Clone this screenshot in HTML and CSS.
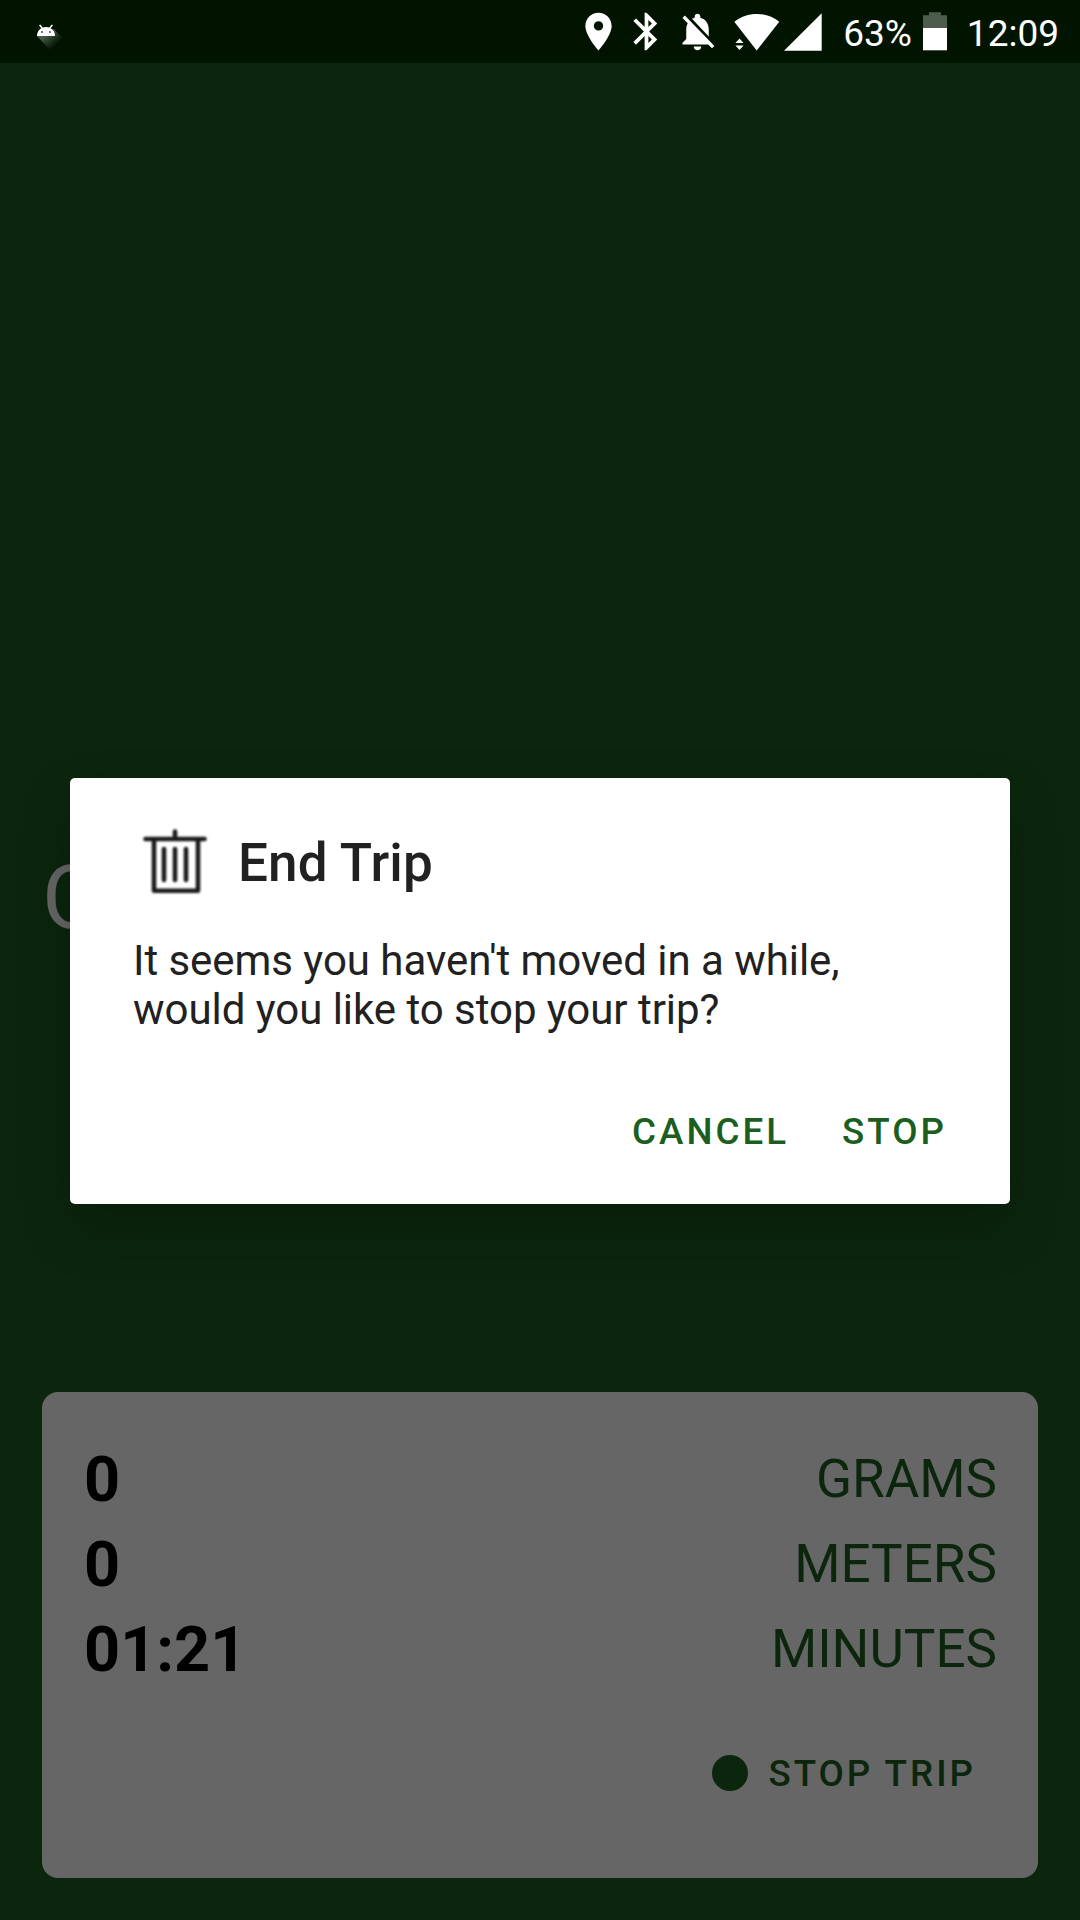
FILE: index.html
```html
<!DOCTYPE html>
<html lang="en">
<head>
<meta charset="utf-8">
<title>End Trip</title>
<link rel="stylesheet" href="styles.css">
</head>
<body>
<div class="screen">
  <header class="status-bar">
    <svg class="android" width="28" height="28" viewBox="0 0 28 28">
      <defs><linearGradient id="cast" x1="6" y1="8" x2="20" y2="24" gradientUnits="userSpaceOnUse"><stop offset="0.2" stop-color="#fff" stop-opacity=".3"/><stop offset="0.9" stop-color="#fff" stop-opacity="0"/></linearGradient></defs>
      <path d="M1 12 18 5 28 16 16 28Z" fill="url(#cast)"/>
      <path d="M1 12C1 8.500 2.800 5.800 5.300 4.300L3 1.200 4.200.4 6.700 3.500C8.700 2.700 11.300 2.700 13.300 3.500L15.800.4 17 1.200 14.700 4.300C17.200 5.800 19 8.500 19 12Z" fill="#fff"/>
      <circle cx="6" cy="8" r="1" fill="#455047"/><circle cx="14" cy="8" r="1" fill="#455047"/>
    </svg>
    <div class="system-icons">
      <svg class="pin" width="45" height="45" viewBox="0 0 24 24"><path d="M12 2C8.130 2 5 5.130 5 9c0 5.250 7 13 7 13s7-7.750 7-13c0-3.870-3.130-7-7-7zm0 9.500a2.500 2.500 0 1 1 0-5 2.500 2.500 0 0 1 0 5z"/></svg>
      <svg class="bluetooth" width="45" height="45" viewBox="0 0 24 24"><path d="M17.710 7.710L12 2h-1v7.590L6.410 5 5 6.410 10.590 12 5 17.590 6.410 19 11 14.410V22h1l5.710-5.710-4.300-4.290 4.300-4.290zM13 5.830l1.880 1.880L13 9.590V5.830zm1.880 10.460L13 18.170v-3.760l1.880 1.880z"/></svg>
      <svg class="bell" width="45" height="45" viewBox="0 0 24 24"><path d="M20 18.690L7.840 6.140 5.270 3.490 4 4.760l2.800 2.800v.01c-.52.99-.8 2.160-.8 3.420v5l-2 2v1h13.730l2 2L21 19.720l-1-1.030zM12 22c1.110 0 2-.89 2-2h-4c0 1.110.89 2 2 2zm6-7.320V11c0-3.080-1.640-5.640-4.500-6.320V4c0-.83-.67-1.500-1.500-1.500s-1.500.67-1.500 1.500v.68c-.51.11-.98.300-1.440.56L18 14.680z"/></svg>
      <svg class="wifi" width="46" height="45" viewBox="0 0 46 45"><path d="M.3 12.700C13 2.300 32.500 2.300 45.300 12.700L22.700 41.500Z"/><path d="M5.500 29.500 9.600 34H1.400ZM1.400 36.500H9.600L5.500 41Z"/></svg>
      <svg class="signal" width="38" height="45" viewBox="0 0 38 45"><path d="M0 41.700 37.700 4.200V41.700Z"/></svg>
      <span class="status-text percent">63%</span>
      <svg class="battery" width="24" height="45" viewBox="0 0 24 45"><path d="M0 6.300H6V3.300H18V6.300H24V19H0Z" fill="#4d5b4d"/><path d="M0 19H24V41.300H0Z"/></svg>
      <span class="status-text clock">12:09</span>
    </div>
  </header>

  <main class="trip">
    <h1 class="heading">C</h1>
    <section class="stats-card">
      <div class="stat"><span class="value">0</span><span class="unit">GRAMS</span></div>
      <div class="stat"><span class="value">0</span><span class="unit">METERS</span></div>
      <div class="stat"><span class="value">01:21</span><span class="unit">MINUTES</span></div>
      <div class="stop-trip"><span class="dot"></span><span class="stop-label">STOP TRIP</span></div>
    </section>
  </main>

  <section class="dialog" role="dialog">
    <div class="dialog-title">
      <svg class="trash" width="84" height="84" viewBox="0 0 84 84"><path d="M12.500 20H71.500M42 12.500V20M21 20V71.800H65V20M31 30V61M42 30V61M53 30V61"/></svg>
      <h2>End Trip</h2>
    </div>
    <p>It seems you haven't moved in a while,<br>would you like to stop your trip?</p>
    <div class="actions"><span>CANCEL</span><span>STOP</span></div>
  </section>
</div>
</body>
</html>
```
FILE: styles.css
```css
* { box-sizing: border-box; margin: 0; padding: 0; }

body { font-family: Roboto, "Liberation Sans", sans-serif; }

svg { display: block; flex: none; }

.screen {
  position: relative;
  display: flex;
  flex-direction: column;
  width: 1080px;
  height: 1920px;
  overflow: hidden;
  background: #0b260d;
}

.status-bar {
  display: flex;
  justify-content: space-between;
  height: 63px;
  padding: 9px 21px 0 36px;
  background: #001400;
  color: #fff;
}

.android { margin-top: 15px; }
.system-icons { display: flex; fill: #fff; }
.bluetooth { margin-left: 3px; }
.bell { margin-left: 6px; }
.wifi { margin-left: 14px; }
.signal { margin-left: 4px; }
.status-text { font-size: 37px; line-height: 49px; white-space: nowrap; }
.percent { margin-left: 21px; }
.battery { margin-left: 11px; }
.clock { margin-left: 20px; }

.trip {
  display: flex;
  flex: 1;
  flex-direction: column;
  justify-content: space-between;
  padding: 783px 42px 42px;
}

.heading { color: #666; font-size: 89.250px; font-weight: 400; line-height: 104px; }

.stats-card {
  height: 486px;
  padding: 42px 41px 42px 42px;
  border-radius: 16px;
  background: #666;
}

.stat {
  display: flex;
  justify-content: space-between;
  height: 85px;
}

.value { color: #000; font-size: 63px; font-weight: 700; line-height: 91px; }
.unit { color: #0b260d; font-size: 53px; line-height: 91px; }

.stop-trip {
  display: flex;
  align-items: center;
  justify-content: flex-end;
  gap: 20px;
  height: 73px;
  margin-top: 47px;
  padding-right: 21px;
  color: #0b260d;
}

.dot { width: 36px; height: 36px; border-radius: 50%; background: currentColor; }
.stop-label { padding-top: 3px; }

.stop-label, .actions {
  font-size: 36.750px;
  font-weight: 500;
  letter-spacing: 3px;
  line-height: 44px;
}

.dialog {
  position: absolute;
  top: 778px;
  left: 70px;
  width: 940px;
  height: 426px;
  padding: 41px 63px 0;
  border-radius: 5px;
  background: #fff;
  box-shadow: 0 24px 54px rgba(0, 0, 0, .24);
  color: #212121;
}

.dialog-title { display: flex; align-items: center; gap: 21px; }
.dialog-title h2 { padding-top: 4px; font-size: 53px; font-weight: 500; letter-spacing: .15px; line-height: 62px; }

.trash {
  fill: none;
  stroke: #1a1a1a;
  stroke-width: 4.600;
  stroke-linecap: round;
  stroke-linejoin: round;
  filter: blur(.9px);
}

.dialog p { margin-top: 33px; font-size: 42px; letter-spacing: -.04px; line-height: 49px; }

.actions {
  display: flex;
  justify-content: flex-end;
  gap: 53px;
  margin-top: 76px;
  color: #1b5e20;
}
```
